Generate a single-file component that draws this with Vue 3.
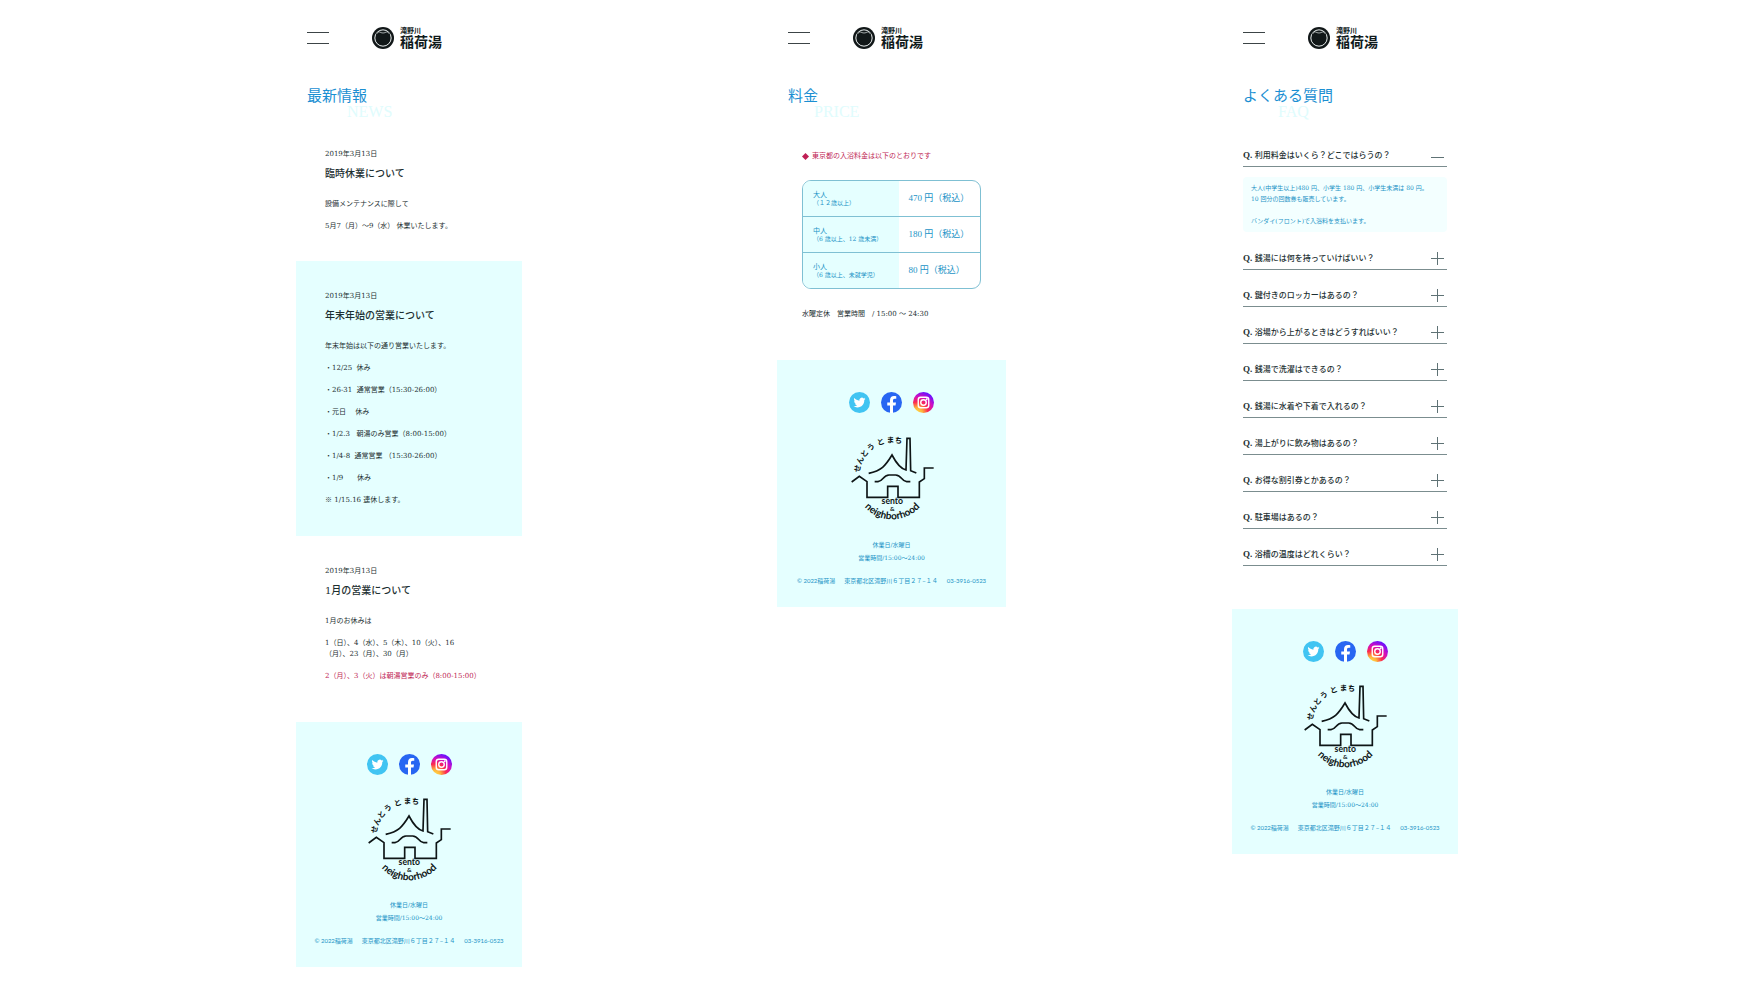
<script setup>
import { reactive } from 'vue'

const pages = [
  { id: 'news', title: '最新情報', sub: 'NEWS' },
  { id: 'price', title: '料金', sub: 'PRICE' },
  { id: 'faq', title: 'よくある質問', sub: 'FAQ' }
]

const articles = [
  {
    date: '2019年3月13日',
    title: '臨時休業について',
    lines: [{ text: '設備メンテナンスに際して' }, { text: '5月7（月）〜9（水） 休業いたします。' }]
  },
  {
    date: '2019年3月13日',
    title: '年末年始の営業について',
    tinted: true,
    lines: [
      { text: '年末年始は以下の通り営業いたします。' },
      { text: '・12/25  休み' },
      { text: '・26-31  通常営業（15:30-26:00）' },
      { text: '・元日　 休み' },
      { text: '・1/2.3   朝湯のみ営業（8:00-15:00）' },
      { text: '・1/4-8  通常営業 （15:30-26:00）' },
      { text: '・1/9　   休み' },
      { text: '※ 1/15.16 連休します。' }
    ]
  },
  {
    date: '2019年3月13日',
    title: '1月の営業について',
    lines: [
      { text: '1月のお休みは' },
      { text: '1（日）、4（水）、5（木）、10（火）、16\n（月）、23（月）、30（月）' },
      { text: '2（月）、3（火）は朝湯営業のみ（8:00-15:00）', alert: true }
    ]
  }
]

const prices = [
  { who: '大人', age: '（１２歳以上）', fee: '470 円（税込）' },
  { who: '中人', age: '（6 歳以上、12 歳未満）', fee: '180 円（税込）' },
  { who: '小人', age: '（6 歳以上、未就学児）', fee: '80 円（税込）' }
]

const faqs = reactive([
  {
    q: '利用料金はいくら？どこではらうの？',
    a: '大人(中学生以上)480 円、小学生 180 円、小学生未満は 80 円。\n10 回分の回数券も販売しています。\n\nバンダイ(フロント)で入浴料を支払います。',
    open: true
  },
  { q: '銭湯には何を持っていけばいい？' },
  { q: '鍵付きのロッカーはあるの？' },
  { q: '浴場から上がるときはどうすればいい？' },
  { q: '銭湯で洗濯はできるの？' },
  { q: '銭湯に水着や下着で入れるの？' },
  { q: '湯上がりに飲み物はあるの？' },
  { q: 'お得な割引券とかあるの？' },
  { q: '駐車場はあるの？' },
  { q: '浴槽の温度はどれくらい？' }
])

const arcLetters = [
  { c: 'せ', a: -79 },
  { c: 'ん', a: -65 },
  { c: 'と', a: -52 },
  { c: 'う', a: -37 },
  { c: 'と', a: -19 },
  { c: 'ま', a: -3 },
  { c: 'ち', a: 10 }
]
</script>

<template>
  <main class="board">
    <section v-for="page in pages" :key="page.id" class="page" :class="'page-' + page.id">
      <header class="bar">
        <button class="burger" type="button" aria-label="メニュー"><span></span><span></span></button>
        <a class="brand" href="#">
          <svg class="crest" viewBox="0 0 66 66" aria-hidden="true">
            <circle cx="33" cy="33" r="33" fill="#111718" />
            <circle cx="33" cy="33" r="24.5" fill="none" stroke="#e9eeee" stroke-width="3" />
            <path d="M12 26 L14 18 Q22 13 26 18 Q33 21 40 18 Q44 13 52 18 L54 26 Q54 44 33 55 Q12 44 12 26Z" fill="#111718" />
            <path d="M15 19 L20 15 Q24 14 27 17 Q33 19 39 17 Q42 14 46 15 L51 19" fill="none" stroke="#e9eeee" stroke-width="2" />
          </svg>
          <span class="brand-text">
            <span class="brand-area">滝野川</span>
            <span class="brand-name">稲荷湯</span>
          </span>
        </a>
      </header>

      <div class="heading">
        <h1>{{ page.title }}</h1>
        <p>{{ page.sub }}</p>
      </div>

      <div v-if="page.id === 'news'" class="news">
        <article v-for="item in articles" :key="item.title" :class="{ tinted: item.tinted }">
          <time datetime="2019-03-13">{{ item.date }}</time>
          <h2>{{ item.title }}</h2>
          <p v-for="line in item.lines" :key="line.text" :class="{ alert: line.alert }">{{ line.text }}</p>
        </article>
      </div>

      <div v-else-if="page.id === 'price'" class="price">
        <p class="note"><svg viewBox="0 0 14 14" aria-hidden="true"><path d="M7 0 L14 7 L7 14 L0 7Z" fill="#c01f55" /></svg>東京都の入浴料金は以下のとおりです</p>
        <table>
          <tbody>
            <tr v-for="row in prices" :key="row.who">
              <th scope="row"><span class="who">{{ row.who }}</span><span class="age">{{ row.age }}</span></th>
              <td>{{ row.fee }}</td>
            </tr>
          </tbody>
        </table>
        <p class="hours">水曜定休　営業時間　/ 15:00 〜 24:30</p>
      </div>

      <ul v-else class="faq">
        <li v-for="(f, i) in faqs" :key="f.q">
          <button type="button" :aria-expanded="!!f.open" :aria-controls="'answer-' + i" @click="f.open = !f.open">
            <span><span class="q">Q.</span> {{ f.q }}</span>
            <svg viewBox="0 0 13 13" aria-hidden="true">
              <path :d="f.open ? 'M0 8.5H13' : 'M0 6.5H13M6.5 0V13'" fill="none" stroke="#5f7275" stroke-width="1" />
            </svg>
          </button>
          <p v-if="f.open && f.a" :id="'answer-' + i" class="answer">{{ f.a }}</p>
        </li>
      </ul>

      <footer>
        <nav class="social" aria-label="SNS">
          <a href="#" aria-label="Twitter">
            <svg viewBox="0 0 42 42" aria-hidden="true">
              <circle cx="21" cy="21" r="21" fill="#41c4f2" />
              <path transform="translate(9 9)" fill="#fff" d="M23.95 4.57a10 10 0 0 1-2.82.77 4.96 4.96 0 0 0 2.16-2.72c-.95.55-2 .95-3.13 1.18a4.92 4.92 0 0 0-8.38 4.48C7.69 8.1 4.07 6.13 1.64 3.16a4.82 4.82 0 0 0-.67 2.48c0 1.71.87 3.21 2.19 4.1a4.9 4.9 0 0 1-2.23-.62v.06a4.92 4.92 0 0 0 3.95 4.83 5 5 0 0 1-2.21.08 4.94 4.94 0 0 0 4.6 3.42A9.87 9.87 0 0 1 0 19.54a14 14 0 0 0 7.55 2.21c9.05 0 14-7.5 14-13.98 0-.21 0-.42-.02-.63a9.94 9.94 0 0 0 2.42-2.57z" />
            </svg>
          </a>
          <a href="#" aria-label="Facebook">
            <svg viewBox="0 0 42 42" aria-hidden="true">
              <circle cx="21" cy="21" r="21" fill="#2866f2" />
              <path fill="#fff" d="M18 42V27H12.500V21H18V16.500C18 11 21 8 26 8C28 8 30 8.300 30.500 8.500V13.500H27.500C25 13.500 24 15 24 17V21H30L29 27H24V42Z" />
            </svg>
          </a>
          <a href="#" aria-label="Instagram">
            <svg viewBox="0 0 42 42" aria-hidden="true">
              <defs>
                <radialGradient :id="'insta-' + page.id" cx="0.2" cy="1" r="1.05">
                  <stop offset="0" stop-color="#ffe14a" />
                  <stop offset="0.25" stop-color="#ffb03b" />
                  <stop offset="0.5" stop-color="#fb2a50" />
                  <stop offset="0.75" stop-color="#d20fc0" />
                  <stop offset="1" stop-color="#6a10ff" />
                </radialGradient>
              </defs>
              <circle cx="21" cy="21" r="21" :fill="`url(#insta-${page.id})`" />
              <rect x="10.500" y="10.500" width="21" height="21" rx="5" fill="none" stroke="#fff" stroke-width="2.800" />
              <circle cx="21" cy="21" r="5.500" fill="none" stroke="#fff" stroke-width="2.800" />
              <circle cx="27.500" cy="14.500" r="1.800" fill="#fff" />
            </svg>
          </a>
        </nav>

        <svg class="sento" viewBox="28 32 252 252" role="img" aria-label="せんとうとまち sento &amp; neighborhood">
          <g fill="none" stroke="#0e1516" stroke-width="5">
            <path d="M84 144 C122 136 134 122 154 89 C168 116 180 130 196 134 L199 39 H208 L210 136 L227 143" />
            <path d="M102 169 H112 C128 168 126 150 145 149 H165 C184 150 182 168 198 169 H209" />
            <path d="M33 170 L56 153 L79 169 V216 H141 V183 H172 V216 H236 V170 L251 160 V128 H279" />
            <path :id="'arc-' + page.id" d="M43 170 A112 112 0 0 0 267 170" stroke="none" />
          </g>
          <g class="kana">
            <text v-for="(l, i) in arcLetters" :key="i" x="155" y="52" :transform="`rotate(${l.a} 155 150)`">{{ l.c }}</text>
          </g>
          <g class="latin">
            <text x="155" y="237">sento</text>
            <text class="amp" x="155" y="256">&amp;</text>
            <text class="arc"><textPath :href="'#arc-' + page.id" startOffset="50%">neighborhood</textPath></text>
          </g>
        </svg>

        <p class="info">休業日/水曜日</p>
        <p class="info">営業時間/15:00〜24:00</p>
        <p class="copy"><span>© 2022稲荷湯</span><span>東京都北区滝野川６丁目２７−１４</span><span>03-3916-0523</span></p>
      </footer>
    </section>
  </main>
</template>

<style>
body {
  background: #fff;
}
</style>

<style scoped>
.board {
  display: grid;
  grid-template-columns: 296fr minmax(226px, 226fr) 255fr minmax(229px, 229fr) 226fr minmax(226px, 226fr) 296fr;
  align-items: start;
  font-family: "DejaVu Serif", "Noto Sans CJK JP", serif;
  font-size: 7px;
  line-height: 11px;
  color: #1d3032;
}
.page-news { grid-column: 2; }
.page-price { grid-column: 4; }
.page-faq { grid-column: 6; }

h1, h2, p, ul {
  margin: 0;
  padding: 0;
}
a {
  color: inherit;
  text-decoration: none;
}
button {
  padding: 0;
  border: 0;
  background: none;
  color: inherit;
  font: inherit;
  cursor: pointer;
}

.bar {
  display: flex;
  align-items: center;
  gap: 43px;
  height: 23px;
  padding: 26px 11px 0;
}
.burger {
  display: flex;
  flex-direction: column;
  gap: 10px;
  width: 22px;
}
.burger span {
  height: 1px;
  background: #3c4446;
}
.brand {
  display: flex;
  align-items: center;
  gap: 6px;
}
.crest {
  width: 22px;
  height: 22px;
}
.brand-text {
  display: flex;
  flex-direction: column;
  font-family: "Noto Sans CJK JP", sans-serif;
  font-weight: 700;
  color: #101a1b;
}
.brand-area {
  font-size: 7px;
  line-height: 6px;
}
.brand-name {
  font-size: 14px;
  line-height: 16px;
}

.heading {
  padding: 40px 11px 0;
}
.heading h1 {
  font-family: "Liberation Serif", "Noto Sans CJK JP", serif;
  font-size: 15px;
  line-height: 15px;
  font-weight: 400;
  color: #1b8fd2;
}
.heading p {
  padding-left: 40px;
  font-family: "Liberation Serif", serif;
  font-size: 16px;
  line-height: 15px;
  color: #e0fcfd;
}
.page-price .heading p { padding-left: 26px; }
.page-faq .heading p { padding-left: 35px; }

article {
  padding: 30px 29px 29px;
}
article.tinted {
  padding-bottom: 30px;
  background: #e5ffff;
}
time {
  display: block;
}
article h2 {
  margin: 6px 0 17px;
  font-size: 10px;
  line-height: 16px;
  font-weight: 500;
}
article p {
  white-space: pre;
}
article p + p {
  margin-top: 11px;
}
.alert {
  color: #c01f55;
}
.news + footer {
  margin-top: 11px;
}

.price {
  padding: 32px 25px 40px;
}
.note {
  display: flex;
  align-items: center;
  gap: 3px;
  color: #c01f55;
}
.note svg {
  width: 7px;
  height: 7px;
}
table {
  width: 100%;
  margin: 18px 0 20px;
  border: 1px solid #7fc0d3;
  border-radius: 9px;
  border-spacing: 0;
  overflow: hidden;
  color: #2293c6;
}
th, td {
  height: 35px;
  padding: 0 10px;
  border-bottom: 1px solid #7fc0d3;
  text-align: left;
  font-weight: 400;
}
tr:last-child > * {
  border-bottom: 0;
}
th {
  width: 54%;
  box-sizing: border-box;
  background: #e5ffff;
}
.who, .age {
  display: block;
  line-height: 8px;
  white-space: nowrap;
}
.age {
  font-size: 6px;
}
td {
  font-family: "Liberation Serif", "Noto Sans CJK JP", serif;
  font-size: 9px;
  white-space: nowrap;
}

.faq {
  padding: 11px 11px 43px;
  list-style: none;
}
.faq button {
  display: flex;
  justify-content: space-between;
  align-items: center;
  width: 100%;
  height: 37px;
  padding: 15px 3px 0 0;
  border-bottom: 1px solid #7b8d8f;
  font-size: 8px;
  font-weight: 500;
  text-align: left;
  white-space: nowrap;
}
.q {
  font-family: "Liberation Serif", serif;
  font-size: 9px;
  font-weight: 700;
}
.faq button svg {
  width: 13px;
  height: 13px;
}
.answer {
  margin: 10px 0 1px;
  padding: 5px 8px 6px;
  border-radius: 4px;
  background: #f3ffff;
  font-size: 6px;
  color: #2293c6;
  white-space: pre;
}

footer {
  display: flex;
  flex-direction: column;
  align-items: center;
  padding: 32px 8px 20px;
  background: #e5ffff;
  color: #2293c6;
}
.social {
  display: flex;
  gap: 11px;
}
.social a, .social svg {
  display: block;
  width: 21px;
  height: 21px;
}
.sento {
  width: 84px;
  height: 84px;
  margin: 22px 0 17px;
  overflow: visible;
}
.page-price .sento {
  margin: 23px 0 18px;
}
.kana text {
  font: 700 23px "Noto Sans CJK JP", sans-serif;
  text-anchor: middle;
  fill: #0e1516;
}
.latin text {
  font: 700 26px Lato, sans-serif;
  text-anchor: middle;
  fill: #0e1516;
}
.latin .amp {
  font-size: 19px;
}
.latin .arc {
  font-size: 30px;
}
.info {
  font-size: 6px;
  line-height: 13px;
}
.copy {
  display: flex;
  gap: 9px;
  margin-top: 11px;
  font-family: Lato, "Noto Sans CJK JP", sans-serif;
  font-size: 6px;
  line-height: 12px;
  white-space: nowrap;
}
</style>
